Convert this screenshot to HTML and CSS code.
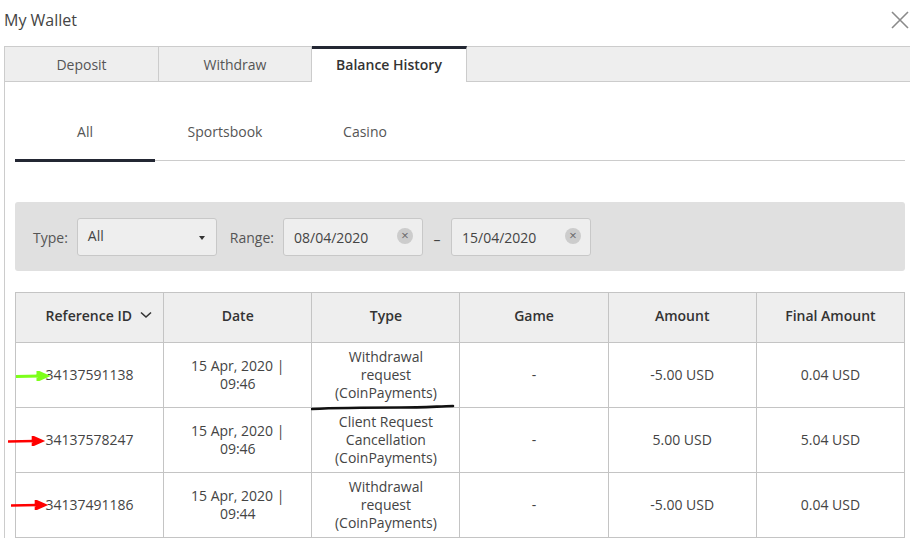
FILE: index.html
```html
<!DOCTYPE html>
<html lang="en">
<head>
    <meta charset="UTF-8">
    <meta name="viewport" content="width=device-width, initial-scale=1.0">
    <title>My Wallet</title>
    <link rel="stylesheet" href="styles.css">
</head>
<body>
    <div class="wallet">
        <div class="wallet-head">
            <h1>My Wallet</h1>
            <button class="close" aria-label="Close">
                <svg width="18" height="18" viewBox="0 0 18 18"><path d="M1 1 L17 17 M17 1 L1 17" stroke="#8a8a8a" stroke-width="1.6" fill="none"/></svg>
            </button>
        </div>

        <div class="tabs">
            <div class="tab">Deposit</div>
            <div class="tab">Withdraw</div>
            <div class="tab active">Balance History</div>
            <div class="tab-fill"></div>
        </div>

        <div class="panel">
            <div class="subtabs">
                <div class="subtab active">All</div>
                <div class="subtab">Sportsbook</div>
                <div class="subtab">Casino</div>
            </div>

            <div class="filters">
                <span class="label">Type:</span>
                <div class="field select">
                    <span>All</span>
                    <span class="caret"></span>
                </div>
                <span class="label">Range:</span>
                <div class="field date">
                    <span>08/04/2020</span>
                    <span class="clear">&times;</span>
                </div>
                <span class="dash">&ndash;</span>
                <div class="field date">
                    <span>15/04/2020</span>
                    <span class="clear">&times;</span>
                </div>
            </div>

            <table class="history">
                <thead>
                    <tr>
                        <th class="ref-head">Reference ID
                            <svg class="sort" width="12" height="8" viewBox="0 0 12 8"><path d="M1 1.5 L6 6 L11 1.5" stroke="#333" stroke-width="1.6" fill="none"/></svg>
                        </th>
                        <th>Date</th>
                        <th>Type</th>
                        <th>Game</th>
                        <th>Amount</th>
                        <th>Final Amount</th>
                    </tr>
                </thead>
                <tbody>
                    <tr>
                        <td class="ref">
                            <svg class="mark green" width="34" height="10" viewBox="0 0 34 10"><path d="M0 5.5 L24 5 M22 1 L31 5 L22 9 Z" stroke="#7dff1a" stroke-width="3" fill="#7dff1a"/></svg>
                            34137591138
                        </td>
                        <td>15 Apr, 2020 |<br>09:46</td>
                        <td class="type">Withdrawal<br>request<br>(CoinPayments)
                            <svg class="underline" width="144" height="8" viewBox="0 0 144 8"><path d="M1 5 C30 3.5 60 3.5 90 3.5 C110 3.5 125 2.5 142 2" stroke="#111" stroke-width="2.6" fill="none" stroke-linecap="round"/></svg>
                        </td>
                        <td>-</td>
                        <td>-5.00 USD</td>
                        <td>0.04 USD</td>
                    </tr>
                    <tr>
                        <td class="ref">
                            <svg class="mark red one" width="38" height="10" viewBox="0 0 38 10"><path d="M0 5.5 L27 5 M25 1 L34 5 L25 9 Z" stroke="#f00" stroke-width="2.6" fill="#f00"/></svg>
                            34137578247
                        </td>
                        <td>15 Apr, 2020 |<br>09:46</td>
                        <td>Client Request<br>Cancellation<br>(CoinPayments)</td>
                        <td>-</td>
                        <td>5.00 USD</td>
                        <td>5.04 USD</td>
                    </tr>
                    <tr>
                        <td class="ref">
                            <svg class="mark red two" width="38" height="10" viewBox="0 0 38 10"><path d="M0 5.5 L27 5 M25 1 L34 5 L25 9 Z" stroke="#f00" stroke-width="2.6" fill="#f00"/></svg>
                            34137491186
                        </td>
                        <td>15 Apr, 2020 |<br>09:44</td>
                        <td>Withdrawal<br>request<br>(CoinPayments)</td>
                        <td>-</td>
                        <td>-5.00 USD</td>
                        <td>0.04 USD</td>
                    </tr>
                </tbody>
            </table>
        </div>
    </div>
</body>
</html>
```

FILE: styles.css
```css
body, html {
    margin: 0;
    padding: 0;
    width: 100%;
    height: 100%;
    overflow: hidden;
    background: #fff;
    font-family: "Open Sans", "Noto Sans", sans-serif;
    color: #444;
}

.wallet-head {
    display: flex;
    align-items: center;
    justify-content: space-between;
    height: 46px;
    padding: 0 1px 0 4px;
    box-sizing: border-box;
}

.wallet-head h1 {
    margin: 0 0 6px;
    font-size: 16px;
    font-weight: 400;
    color: #444;
}

.close {
    background: none;
    border: none;
    padding: 0;
    margin-bottom: 7px;
    cursor: pointer;
    line-height: 0;
}

.tabs {
    display: flex;
    margin-left: 4px;
    height: 36px;
    border-top: 1px solid #ccc;
    border-left: 1px solid #ccc;
    box-sizing: border-box;
}

.tab {
    width: 154px;
    display: flex;
    align-items: center;
    justify-content: center;
    background: #eee;
    border-right: 1px solid #ccc;
    border-bottom: 1px solid #ccc;
    font-size: 14px;
    color: #555;
    padding-top: 1px;
    box-sizing: border-box;
}

.tab:nth-child(2) {
    width: 153px;
}

.tab.active {
    width: 155px;
    background: #fff;
    border-top: 3px solid #232733;
    margin-top: -1px;
    border-bottom: none;
    padding: 0 0 3px;
    font-weight: 600;
    color: #333;
}

.tab-fill {
    flex: 1;
    background: #eee;
    border-bottom: 1px solid #ccc;
}

.panel {
    margin-left: 4px;
    border-left: 1px solid #ccc;
    padding: 0 5px 0 10px;
    min-height: 460px;
}

.subtabs {
    display: flex;
    border-bottom: 1px solid #ccc;
}

.subtab {
    width: 140px;
    text-align: center;
    padding: 40px 0 16px;
    line-height: 20px;
    font-size: 14px;
    color: #555;
    border-bottom: 3px solid transparent;
    margin-bottom: -1px;
}

.subtab.active {
    border-bottom-color: #232733;
    margin-bottom: -2px;
}

.filters {
    margin-top: 41px;
    height: 69px;
    background: #e0e0e0;
    border-radius: 3px;
    display: flex;
    align-items: center;
    padding: 1px 0 0 18px;
    box-sizing: border-box;
    font-size: 14px;
}

.label {
    color: #555;
    margin-right: 9px;
}

.field {
    height: 38px;
    background: #eee;
    border: 1px solid #c8c8c8;
    border-radius: 3px;
    box-sizing: border-box;
    display: flex;
    align-items: center;
    justify-content: space-between;
    padding: 0 10px;
    color: #444;
}

.select {
    width: 140px;
    margin-right: 13px;
    padding: 0 10px 4px;
}

.caret {
    width: 0;
    height: 0;
    border-left: 3px solid transparent;
    border-right: 3px solid transparent;
    border-top: 4px solid #333;
    margin: 5px 1px 0 0;
}

.date {
    width: 140px;
    padding: 0 9px 0 10px;
}

.clear {
    width: 16px;
    height: 16px;
    border-radius: 50%;
    background: #ccc;
    color: #666;
    font-size: 13px;
    line-height: 14px;
    text-align: center;
    margin-top: -2px;
}

.dash {
    width: 28px;
    text-align: center;
    padding-top: 4px;
    color: #444;
}

.history {
    margin-top: 21px;
    width: 890px;
    border-collapse: collapse;
    table-layout: fixed;
    font-size: 14px;
}

.history th,
.history td {
    border: 1px solid #c4c4c4;
    text-align: center;
    vertical-align: middle;
}

.history th {
    height: 45px;
    background: #eee;
    font-weight: 600;
    color: #333;
    padding: 0 8px 4px;
}

.history th.ref-head {
    padding-left: 26px;
}

.history td {
    height: 64px;
    line-height: 18px;
    color: #444;
    padding: 0 8px;
    position: relative;
}

.sort {
    margin-left: 4px;
    vertical-align: 2px;
}

.mark {
    position: absolute;
    top: 28px;
}

.mark.green {
    left: 0;
}

.mark.red.one {
    left: -8px;
    top: 28px;
}

.mark.red.two {
    left: -5px;
    top: 27px;
}

.underline {
    position: absolute;
    left: -1px;
    bottom: -5px;
}
```
